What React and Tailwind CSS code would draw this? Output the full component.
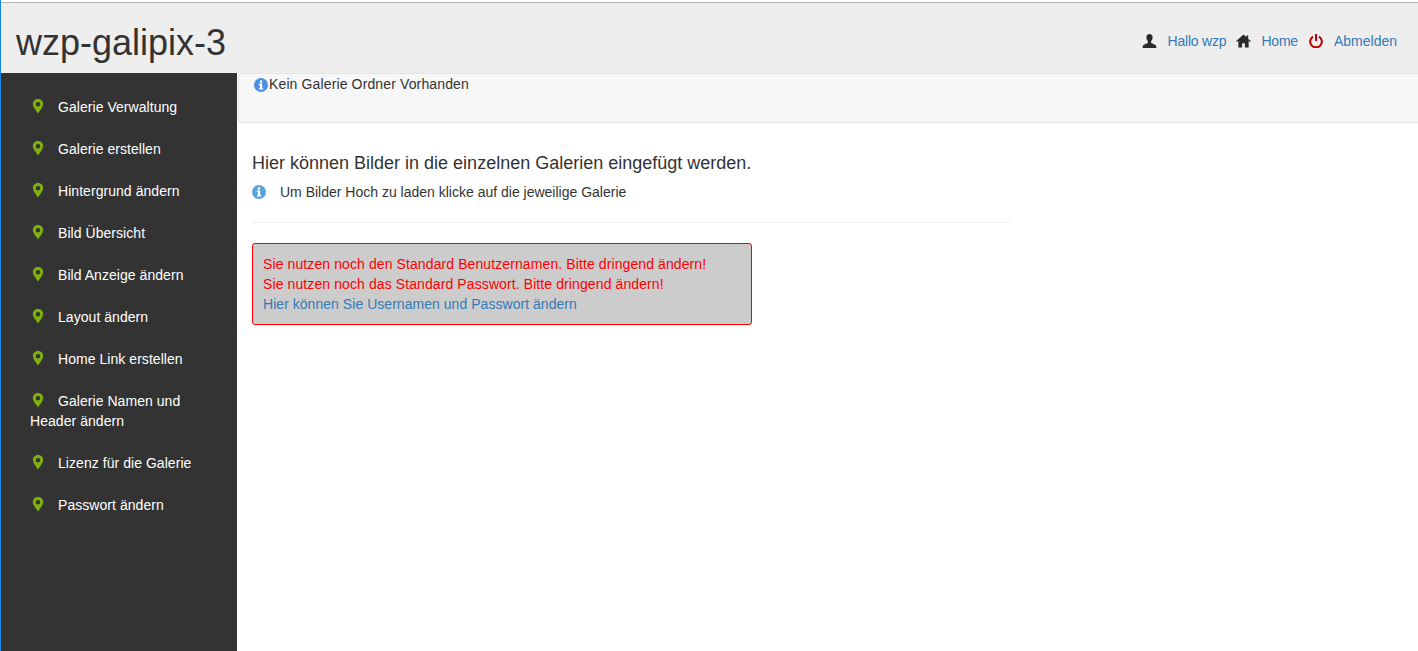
const navItems = [
  "Galerie Verwaltung",
  "Galerie erstellen",
  "Hintergrund ändern",
  "Bild Übersicht",
  "Bild Anzeige ändern",
  "Layout ändern",
  "Home Link erstellen",
  "Galerie Namen und Header ändern",
  "Lizenz für die Galerie",
  "Passwort ändern",
];

const MapMarker = () => (
  <svg viewBox="0 0 12 16" className="absolute left-[2px] top-[2px] h-[15px] w-[12px]">
    <path
      fill="#7fb10a"
      fillRule="evenodd"
      d="M6 0C2.700 0 .5 2.400.5 5.400c0 3.400 3.300 6.600 5.500 10 2.200-3.400 5.500-6.600 5.500-10C11.500 2.400 9.300 0 6 0zm0 3.200a2.400 2.400 0 1 1 0 4.800 2.400 2.400 0 0 1 0-4.800z"
    />
  </svg>
);

const InfoCircle = ({ color, className }) => (
  <svg viewBox="0 0 14 14" className={className}>
    <circle cx="7" cy="7" r="7" fill={color} />
    <rect x="5.900" y="2.400" width="2.300" height="2.200" fill="#fff" />
    <path fill="#fff" d="M4.900 5.600h3.300v4.600h1v1.300H4.900v-1.300h1V6.900h-1z" />
  </svg>
);

const UserIcon = () => (
  <svg viewBox="0 0 14 14" className="h-[14px] w-[15px]">
    <path
      fill="#2b2b2b"
      d="M7 0c2 0 3.100 1.400 3.100 3.400 0 1.500-.6 2.900-1.500 3.700v1.300c0 .6 1 .9 2.400 1.500 1.500.6 2.600 1 2.800 2.200V14H.2v-1.900c.2-1.200 1.300-1.600 2.800-2.200C4.400 9.300 5.400 9 5.400 8.400V7.100C4.500 6.300 3.900 4.900 3.900 3.400 3.900 1.400 5 0 7 0z"
    />
  </svg>
);

const HomeIcon = () => (
  <svg viewBox="0 0 16 14" className="h-[14px] w-[15px]">
    <path fill="#2b2b2b" d="M8 0l3 2.700V1h2v3.500L16 7.200l-.8.9-1.700-1.500V14H9.500V9.500h-3V14H2.500V6.600L.8 8.100 0 7.200z" />
  </svg>
);

const PowerIcon = () => (
  <svg viewBox="0 0 14 14" className="h-[14px] w-[14px]" fill="none" stroke="#c00000" strokeWidth="2">
    <path d="M4 2.600a5.800 5.800 0 1 0 6 0" />
    <path d="M7 0v7" />
  </svg>
);

const App = () => {
  return (
    <div
      className="flex h-screen flex-col overflow-hidden border-l border-[#1a82e2] bg-white text-sm leading-5 text-[#333]"
      style={{ fontFamily: '"Liberation Sans", Arial, sans-serif' }}
    >
      <header className="mt-[2px] flex h-[71px] shrink-0 items-center justify-between border-t border-[#b4b4b4] bg-[#eeeeee] pl-[15px] pr-[21px]">
        <h1 className="mt-[10px] text-4xl leading-10 text-[#333]">wzp-galipix-3</h1>
        <div className="mt-[6px] flex items-center">
          <UserIcon />
          <a className="ml-[11px] tracking-[-0.2px] text-[#337ab7]">Hallo wzp</a>
          <span className="ml-[10px]"><HomeIcon /></span>
          <a className="ml-[10px] tracking-[-0.2px] text-[#337ab7]">Home</a>
          <span className="ml-[11px]"><PowerIcon /></span>
          <a className="ml-[11px] text-[#337ab7]">Abmelden</a>
        </div>
      </header>

      <div className="flex min-h-0 flex-1">
        <aside className="w-[236px] shrink-0 bg-[#333333] pt-[13px] tracking-[0.05px]">
          {navItems.map((item) => (
            <div key={item} className="px-[29px] py-[11px] text-white">
              <span className="relative mr-[14px] inline-block h-[14px] w-[14px] align-top">
                <MapMarker />
              </span>
              {item}
            </div>
          ))}
        </aside>

        <main className="min-w-0 flex-1">
          <div className="ml-px flex h-[50px] items-start rounded-l border border-r-0 border-[#e5e5e5] bg-[#f7f7f7] pl-[15px]">
            <InfoCircle color="#4a90e2" className="mt-[4px] h-[14px] w-[14px] shrink-0" />
            <span className="ml-px tracking-[0.13px]">Kein Galerie Ordner Vorhanden</span>
          </div>

          <div className="w-[773px] pl-[15px]">
            <h4 className="mt-[30px] text-lg leading-5">Hier können Bilder in die einzelnen Galerien eingefügt werden.</h4>
            <p className="mt-[9px] flex">
              <InfoCircle color="#5aa5d8" className="mt-[3px] h-[14px] w-[14px] shrink-0" />
              <span className="ml-[14px]">Um Bilder Hoch zu laden klicke auf die jeweilige Galerie</span>
            </p>
            <hr className="mt-5 border-[#eeeeee]" />
          </div>

          <div className="ml-[15px] mt-5 w-[500px] rounded-[3px] border border-[#ff0000] bg-[#cccccc] p-[10px] text-[#ff0000]">
            <div className="tracking-[0.1px]">Sie nutzen noch den Standard Benutzernamen. Bitte dringend ändern!</div>
            <div className="tracking-[0.1px]">Sie nutzen noch das Standard Passwort. Bitte dringend ändern!</div>
            <a className="tracking-[0.04px] text-[#337ab7]">Hier können Sie Usernamen und Passwort ändern</a>
          </div>
        </main>
      </div>
    </div>
  );
};

export default App;
